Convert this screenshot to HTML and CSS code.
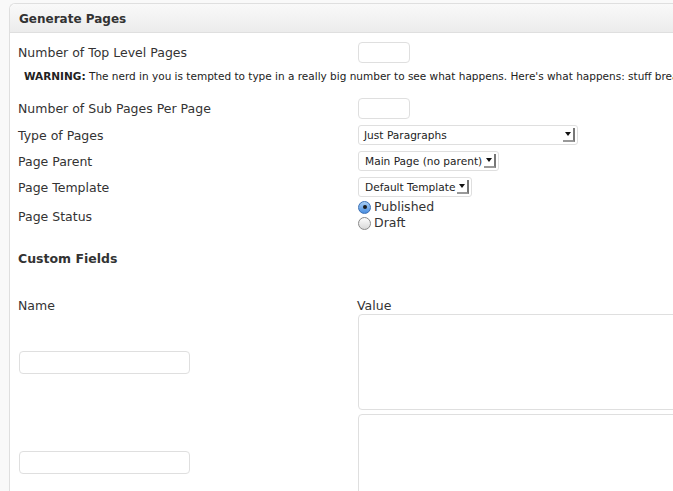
FILE: index.html
```html
<!DOCTYPE html>
<html>
<head>
<meta charset="utf-8">
<link rel="stylesheet" href="styles.css">
</head>
<body>
<div class="box">
  <div class="box-head">Generate Pages</div>
  <div class="box-body">
    <div class="row r1">
      <div class="label">Number of Top Level Pages</div>
      <div class="field"><div class="num"></div></div>
    </div>
    <div class="warning"><b>WARNING:</b> The nerd in you is tempted to type in a really big number to see what happens. Here's what happens: stuff breaks.</div>
    <div class="row r2">
      <div class="label">Number of Sub Pages Per Page</div>
      <div class="field"><div class="num"></div></div>
    </div>
    <div class="row">
      <div class="label">Type of Pages</div>
      <div class="field"><div class="select w1"><span class="sel-text">Just Paragraphs</span><span class="arrow"></span></div></div>
    </div>
    <div class="row">
      <div class="label">Page Parent</div>
      <div class="field"><div class="select"><span class="sel-text">Main Page (no parent)</span><span class="arrow"></span></div></div>
    </div>
    <div class="row">
      <div class="label">Page Template</div>
      <div class="field"><div class="select"><span class="sel-text">Default Template</span><span class="arrow"></span></div></div>
    </div>
    <div class="row status">
      <div class="label">Page Status</div>
      <div class="field radios">
        <div class="radio-row"><span class="radio on"></span>Published</div>
        <div class="radio-row"><span class="radio"></span>Draft</div>
      </div>
    </div>
    <div class="cf-title">Custom Fields</div>
    <div class="row cf-head">
      <div class="label">Name</div>
      <div class="field">Value</div>
    </div>
    <div class="row cf-row">
      <div class="label"><div class="name-input"></div></div>
      <div class="field"><div class="textarea"></div></div>
    </div>
    <div class="row cf-row">
      <div class="label"><div class="name-input"></div></div>
      <div class="field"><div class="textarea"></div></div>
    </div>
  </div>
</div>
</body>
</html>
```
FILE: styles.css
```css
html, body {
  margin: 0;
  padding: 0;
  background: #f9f9f9;
  overflow: hidden;
}
body {
  font-family: "DejaVu Sans", sans-serif;
  font-size: 12.5px;
  color: #333;
  width: 673px;
  height: 491px;
}
.box {
  margin: 3px 0 0 9px;
  border: 1px solid #dfdfdf;
  border-right: none;
  border-radius: 6px 0 0 0;
  background: #fff;
  width: 800px;
  height: 600px;
}
.box-head {
  height: 26px;
  padding-top: 2px;
  line-height: 26px;
  padding-left: 9px;
  font-weight: bold;
  font-size: 12px;
  color: #333;
  background: linear-gradient(#f9f9f9, #ececec);
  border-bottom: 1px solid #dfdfdf;
  border-radius: 6px 0 0 0;
}
.box-body {
  padding: 5px 0 0 8px;
}
.row {
  display: flex;
  align-items: center;
  height: 26px;
}
.r1 { height: 28px; }
.r2 { height: 28px; margin-top: 8px; }
.label {
  width: 340px;
  flex: none;
}
.field {
  flex: none;
}
.num {
  width: 50px;
  height: 19px;
  border: 1px solid #dfdfdf;
  border-radius: 4px;
  background: #fff;
}
.warning {
  height: 20px;
  line-height: 20px;
  font-size: 10.5px;
  padding-left: 6px;
  white-space: nowrap;
  color: #222;
}
.select {
  display: inline-flex;
  align-items: center;
  height: 18px;
  border: 1px solid #dfdfdf;
  border-radius: 3px;
  padding-left: 6px;
  padding-right: 2px;
  font-size: 10.6px;
  color: #222;
  background: #fff;
}
.select.w1 {
  width: 211px;
  justify-content: space-between;
  padding-left: 5px;
}
.sel-text {
  white-space: nowrap;
}
.arrow {
  position: relative;
  width: 12px;
  height: 14px;
  margin-left: 2px;
  background: #fff;
  border-right: 2px solid #777;
  border-bottom: 2px solid #999;
  box-sizing: border-box;
}
.arrow::after {
  content: "";
  position: absolute;
  left: 2px;
  top: 4px;
  border-left: 3px solid transparent;
  border-right: 3px solid transparent;
  border-top: 4px solid #111;
}
.status {
  height: 32px;
}
.radios {
  display: flex;
  flex-direction: column;
  font-size: 12.5px;
  line-height: 16px;
  margin-top: -2px;
}
.radio-row {
  display: flex;
  align-items: center;
  height: 16px;
}
.radio {
  width: 11px;
  height: 11px;
  border: 1px solid #8a8a8a;
  border-radius: 50%;
  margin-right: 3px;
  background: linear-gradient(#fdfdfd, #d8d8d8);
  position: relative;
  flex: none;
}
.radio.on {
  border-color: #3a6fb5;
  background: linear-gradient(#a7cdf4, #4a8ee0);
}
.radio.on::after {
  content: "";
  position: absolute;
  left: 3.5px;
  top: 3.5px;
  width: 4px;
  height: 4px;
  border-radius: 50%;
  background: #1a1a1a;
}
.cf-title {
  margin-top: 17px;
  height: 20px;
  line-height: 20px;
  font-weight: bold;
}
.cf-head {
  margin-top: 29px;
  height: 14px;
}
.cf-head .field {
  margin-left: -1px;
}
.cf-row {
  height: 100px;
}
.name-input {
  width: 169px;
  height: 21px;
  margin-left: 1px;
  border: 1px solid #dfdfdf;
  border-radius: 4px;
}
.textarea {
  width: 340px;
  height: 94px;
  border: 1px solid #dfdfdf;
  border-radius: 4px;
}
```
